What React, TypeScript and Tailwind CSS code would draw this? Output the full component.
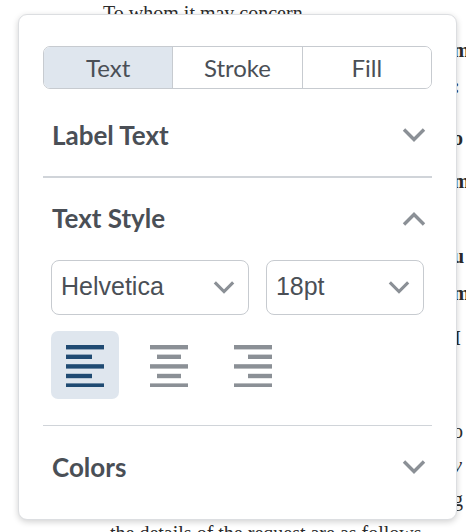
import { useState } from "react";

// ─────────────────────────────────────────
// Icons
// ─────────────────────────────────────────

function Chevron({ up = false, className = "" }: { up?: boolean; className?: string }) {
  return (
    <svg
      viewBox="0 0 24 14"
      className={className}
      fill="none"
      stroke="currentColor"
      strokeWidth={3.4}
      strokeLinecap="butt"
      strokeLinejoin="miter"
    >
      {up ? <path d="M2 12.5 L12 2.5 L22 12.5" /> : <path d="M2 1.5 L12 11.5 L22 1.5" />}
    </svg>
  );
}

type Align = "left" | "center" | "right";

function AlignIcon({ align }: { align: Align }) {
  const rows = [38, 26, 38, 26, 38];
  const shortW = align === "left" ? 26 : 24;
  return (
    <svg viewBox="0 0 40 44" className="h-[44px] w-[40px]" fill="currentColor">
      {rows.map((w, i) => {
        const width = w === 38 ? 38 : shortW;
        const x = align === "left" ? 1 : align === "center" ? 1 + (38 - width) / 2 : 39 - width;
        return <rect key={i} x={x} y={2 + i * 9.6} width={width} height={4.4} />;
      })}
    </svg>
  );
}

// ─────────────────────────────────────────
// Pieces
// ─────────────────────────────────────────

function Segmented() {
  const [tab, setTab] = useState("Text");
  return (
    <div className="flex h-[43px] overflow-hidden rounded-[7px] border-[1.5px] border-[#c7cbd0]">
      {["Text", "Stroke", "Fill"].map((t, i) => (
        <button
          key={t}
          onClick={() => setTab(t)}
          className={`flex flex-1 items-center justify-center text-[24px] text-[#4a4f56] ${
            i > 0 ? "border-l-[1.5px] border-[#c7cbd0]" : ""
          } ${tab === t ? "bg-[#dfe6ee]" : "bg-white"}`}
        >
          {t}
        </button>
      ))}
    </div>
  );
}

function SectionHeader({ title, open }: { title: string; open?: boolean }) {
  return (
    <div className="flex h-[82px] items-center justify-between pl-[9px] pr-[6px]">
      <span className="text-[26px] font-bold text-[#4a4f56]">{title}</span>
      <Chevron up={open} className="h-[14px] w-[24px] text-[#8b9096]" />
    </div>
  );
}

function Select({ value, width }: { value: string; width: string }) {
  return (
    <div
      className={`flex h-[55px] ${width} items-center justify-between rounded-[8px] border-[1.5px] border-[#c7cbd0] pl-[9px] pr-[13px]`}
    >
      <span className="font-['Liberation_Sans',sans-serif] text-[25px] text-[#4a4f56]">{value}</span>
      <Chevron className="h-[13px] w-[22px] text-[#8b9096]" />
    </div>
  );
}

function Divider() {
  return <div className="h-[1.5px] bg-[#d0d4d9]" />;
}

// ─────────────────────────────────────────
// Background document
// ─────────────────────────────────────────

const docLines: { text: string; mt: string; cls?: string; pl?: string }[] = [
  { text: "To whom it may concern", mt: "mt-[1px]", pl: "pl-[103px]" },
  { text: "m", mt: "mt-[13px]", cls: "font-bold" },
  { text: ":", mt: "mt-[12px]", cls: "font-bold" },
  { text: "o", mt: "mt-[28px]", cls: "font-bold" },
  { text: "m", mt: "mt-[19px]", cls: "font-bold" },
  { text: "u", mt: "mt-[51px]", cls: "font-bold" },
  { text: "m", mt: "mt-[13px]", cls: "font-bold" },
  { text: "I", mt: "mt-[21px]", cls: "font-bold" },
  { text: "o", mt: "mt-[69px]" },
  { text: "v", mt: "mt-[10px]", cls: "italic" },
  { text: "g", mt: "mt-[10px]" },
  { text: "the details of the request are as follows", mt: "mt-[10px]", pl: "pl-[110px]" },
];

// ─────────────────────────────────────────
// App
// ─────────────────────────────────────────

export default function App() {
  const [align, setAlign] = useState<Align>("left");
  return (
    <div className="relative h-[532px] w-[466px] overflow-hidden bg-white">
      <div className="flex flex-col font-['Liberation_Serif',serif] text-[20px] leading-[24px] text-[#2b2b2b]">
        {docLines.map((l, i) => (
          <div key={i} className={`${l.mt} ${l.pl ?? "pl-[453px]"} ${l.cls ?? ""} whitespace-nowrap`}>
            {l.text}
          </div>
        ))}
      </div>

      <div className="absolute left-[18px] top-[14px] flex h-[506px] w-[439px] flex-col rounded-[9px] border border-[#dcdee1] bg-white px-[24px] pt-[31px] font-['Lato',sans-serif] shadow-[0_2px_6px_rgba(0,0,0,0.18)]">
        <Segmented />
        <div className="pt-[5px]">
          <SectionHeader title="Label Text" />
        </div>
        <Divider />
        <SectionHeader title="Text Style" open />
        <div className="flex gap-[17px] px-[8px]">
          <Select value="Helvetica" width="w-[199px]" />
          <Select value="18pt" width="w-[159px]" />
        </div>
        <div className="mt-[16px] flex gap-[16px] px-[8px]">
          {(["left", "center", "right"] as Align[]).map((a) => (
            <button
              key={a}
              onClick={() => setAlign(a)}
              className={`flex h-[68px] w-[68px] items-center justify-center rounded-[7px] ${
                align === a ? "bg-[#dfe6ee] text-[#1f4a72]" : "text-[#8b9096]"
              }`}
            >
              <AlignIcon align={a} />
            </button>
          ))}
        </div>
        <div className="mt-[26px]">
          <Divider />
        </div>
        <SectionHeader title="Colors" />
      </div>
    </div>
  );
}
